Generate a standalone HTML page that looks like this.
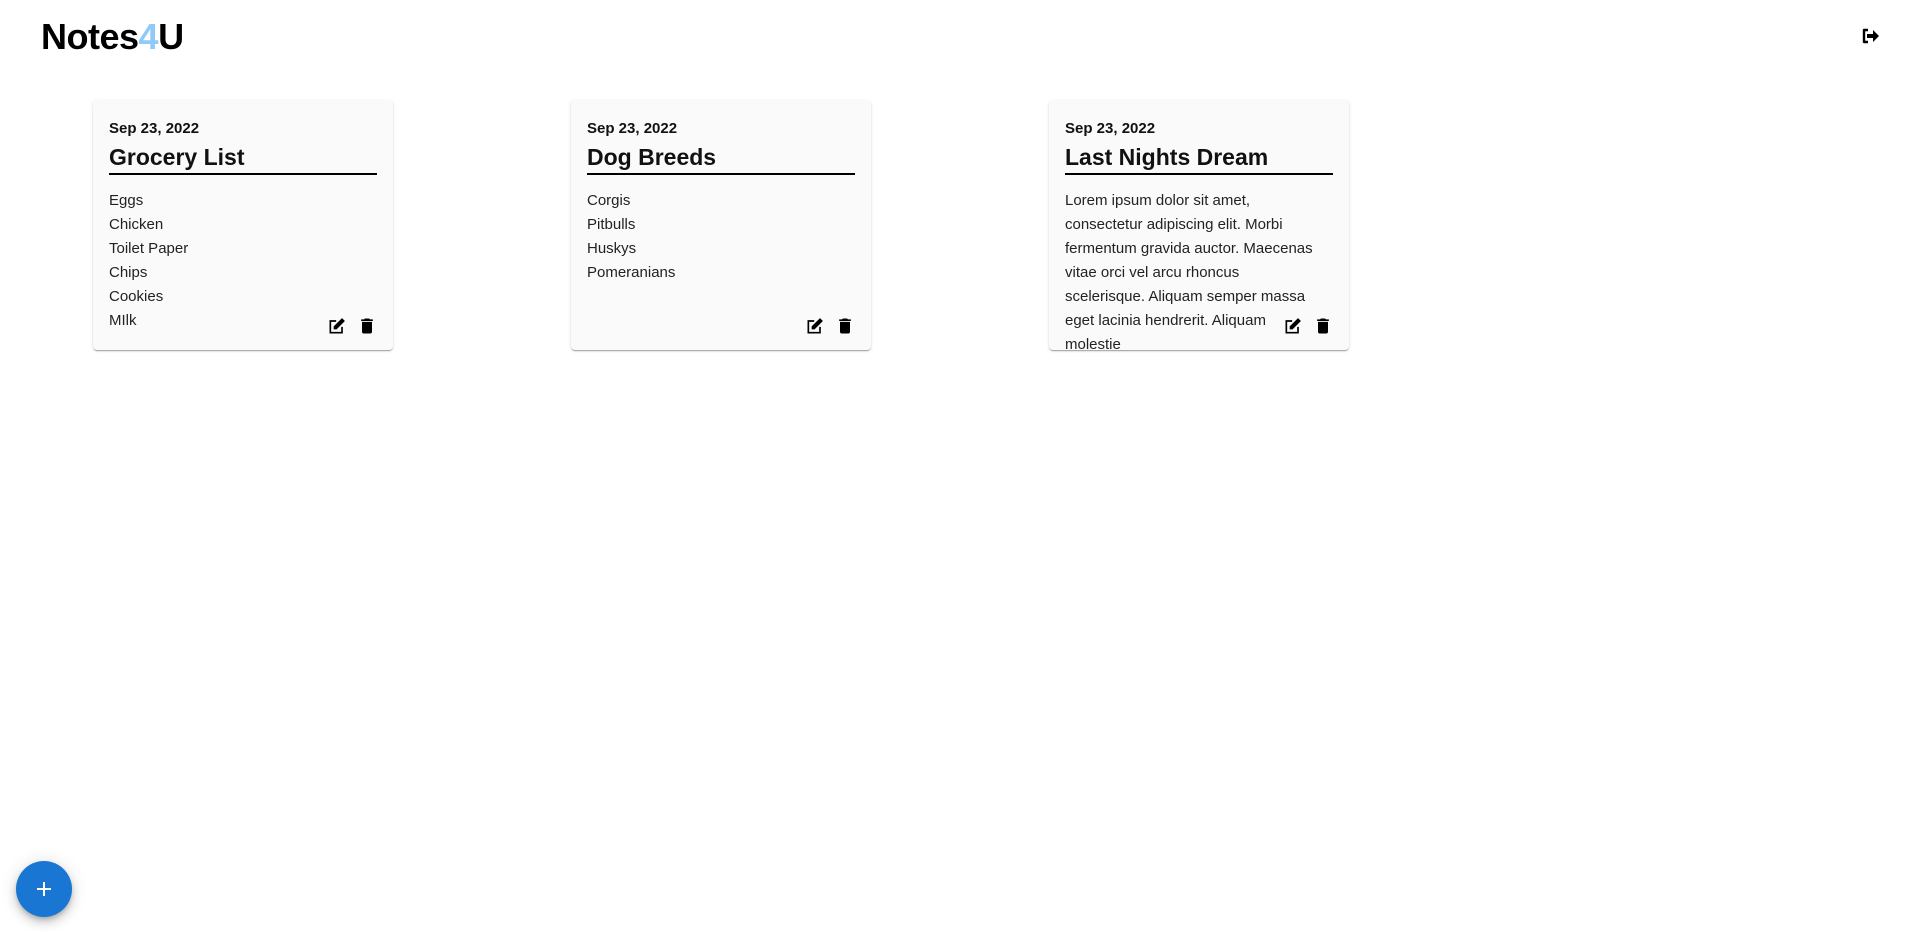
<!DOCTYPE html>
<html><head><style>
*{box-sizing:border-box;margin:0;padding:0}
body{width:1920px;height:932px;background:#fff;font-family:"Liberation Sans",sans-serif;position:relative;overflow:hidden;color:#222}
.logo{position:absolute;left:41px;top:16px;font-size:36px;font-weight:bold;color:#000;letter-spacing:-0.5px}
.logo span{color:#90caf9}
.out{position:absolute;left:1861px;top:28px}
.card{position:absolute;top:100px;width:300px;height:250px;background:#fafafa;border-radius:4px;box-shadow:0 2px 1px -1px rgba(0,0,0,.2),0 1px 1px rgba(0,0,0,.14),0 1px 3px rgba(0,0,0,.12);padding:19px 16px 0 16px;overflow:hidden}
.date{font-size:15px;font-weight:bold;color:#111;line-height:20px;margin-bottom:2px}
.title{font-size:23px;font-weight:bold;color:#111;border-bottom:2px solid #000;line-height:32px;margin-bottom:14px}
.body{font-size:15px;line-height:24px;color:#222;white-space:pre-line}
.icons{position:absolute;right:16px;top:216px;display:flex;gap:10px}
.fab{position:absolute;left:16px;top:861px;width:56px;height:56px;border-radius:50%;background:#1976d2;box-shadow:0 3px 5px -1px rgba(0,0,0,.2),0 6px 10px rgba(0,0,0,.14),0 1px 18px rgba(0,0,0,.12)}
.fab:before{content:"";position:absolute;left:21px;top:27px;width:14px;height:2px;background:#fff}
.fab:after{content:"";position:absolute;left:27px;top:21px;width:2px;height:14px;background:#fff}
</style></head><body>
<div class="logo">Notes<span>4</span>U</div>
<svg class="out" width="20" height="16" viewBox="0 0 20 16"><path d="M7 2H3v12h4" fill="none" stroke="#000" stroke-width="2.4" stroke-linejoin="round"/><path d="M6 6h6V2l6 6-6 6v-4H6z" fill="#000"/></svg>

<div class="card" style="left:93px"><div class="date">Sep 23, 2022</div><div class="title">Grocery List</div><div class="body">Eggs
Chicken
Toilet Paper
Chips
Cookies
MIlk</div>
<div class="icons"><svg width="20" height="20" viewBox="0 0 24 24"><path d="M3 5v16h16v-8h-2v6H5V7h6V5z" fill="#000"/><path d="M8 16v-3.5L18 2.5l3.5 3.5L11.5 16z" fill="#000"/></svg><svg width="20" height="20" viewBox="0 0 24 24"><path d="M6 19c0 1.1.9 2 2 2h8c1.1 0 2-.9 2-2V7H6v12zM19 4h-3.5l-1-1h-5l-1 1H5v2h14V4z" fill="#000"/></svg></div></div>

<div class="card" style="left:571px"><div class="date">Sep 23, 2022</div><div class="title">Dog Breeds</div><div class="body">Corgis
Pitbulls
Huskys
Pomeranians</div>
<div class="icons"><svg width="20" height="20" viewBox="0 0 24 24"><path d="M3 5v16h16v-8h-2v6H5V7h6V5z" fill="#000"/><path d="M8 16v-3.5L18 2.5l3.5 3.5L11.5 16z" fill="#000"/></svg><svg width="20" height="20" viewBox="0 0 24 24"><path d="M6 19c0 1.1.9 2 2 2h8c1.1 0 2-.9 2-2V7H6v12zM19 4h-3.5l-1-1h-5l-1 1H5v2h14V4z" fill="#000"/></svg></div></div>

<div class="card" style="left:1049px"><div class="date">Sep 23, 2022</div><div class="title">Last Nights Dream</div><div class="body">Lorem ipsum dolor sit amet,
consectetur adipiscing elit. Morbi
fermentum gravida auctor. Maecenas
vitae orci vel arcu rhoncus
scelerisque. Aliquam semper massa
eget lacinia hendrerit. Aliquam
molestie</div>
<div class="icons"><svg width="20" height="20" viewBox="0 0 24 24"><path d="M3 5v16h16v-8h-2v6H5V7h6V5z" fill="#000"/><path d="M8 16v-3.5L18 2.5l3.5 3.5L11.5 16z" fill="#000"/></svg><svg width="20" height="20" viewBox="0 0 24 24"><path d="M6 19c0 1.1.9 2 2 2h8c1.1 0 2-.9 2-2V7H6v12zM19 4h-3.5l-1-1h-5l-1 1H5v2h14V4z" fill="#000"/></svg></div></div>

<div class="fab"></div>
</body></html>
